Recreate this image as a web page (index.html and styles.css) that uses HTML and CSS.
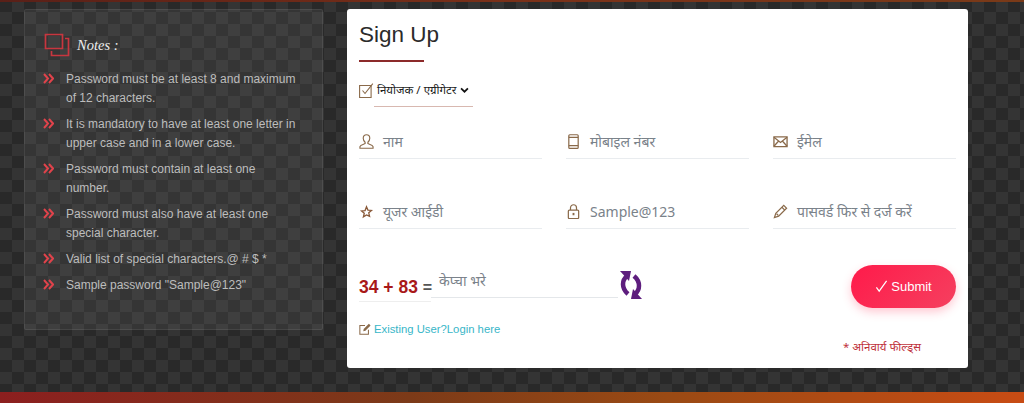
FILE: index.html
```html
<!DOCTYPE html>
<html lang="hi">
<head>
<meta charset="utf-8">
<title>Sign Up</title>
<link rel="stylesheet" href="styles.css">
</head>
<body>
<div class="top-bar"></div>
<main class="main">
  <aside class="notes">
    <div class="notes-head">
      <svg class="notes-icon" viewBox="0 0 26 24" fill="none" stroke="#c8363f" stroke-width="1.7"><path d="M1.500 1.500h17v14h-17z"/><path d="M21 5.500h3.500v17H7.500V18"/></svg>
      <span>Notes :</span>
    </div>
    <ul class="note-list">
      <li class="note"><svg class="chev" viewBox="0 0 11 11"><path d="M1 1l4 4.500-4 4.500M6 1l4 4.500-4 4.500"/></svg><span>Password must be at least 8 and maximum of 12 characters.</span></li>
      <li class="note"><svg class="chev" viewBox="0 0 11 11"><path d="M1 1l4 4.500-4 4.500M6 1l4 4.500-4 4.500"/></svg><span>It is mandatory to have at least one letter in upper case and in a lower case.</span></li>
      <li class="note"><svg class="chev" viewBox="0 0 11 11"><path d="M1 1l4 4.500-4 4.500M6 1l4 4.500-4 4.500"/></svg><span>Password must contain at least one number.</span></li>
      <li class="note"><svg class="chev" viewBox="0 0 11 11"><path d="M1 1l4 4.500-4 4.500M6 1l4 4.500-4 4.500"/></svg><span>Password must also have at least one special character.</span></li>
      <li class="note"><svg class="chev" viewBox="0 0 11 11"><path d="M1 1l4 4.500-4 4.500M6 1l4 4.500-4 4.500"/></svg><span>Valid list of special characters.@ # $ *</span></li>
      <li class="note"><svg class="chev" viewBox="0 0 11 11"><path d="M1 1l4 4.500-4 4.500M6 1l4 4.500-4 4.500"/></svg><span>Sample password "Sample@123"</span></li>
    </ul>
  </aside>
  <section class="card">
    <h1 class="title">Sign Up</h1>
    <div class="title-rule"></div>
    <div class="role">
      <svg class="role-icon" viewBox="0 0 15 15" fill="none" stroke="#8a6a4a" stroke-width="1.100"><path d="M.6 2.500h11.500v12H.6z"/><path d="M3.500 7.500l2.500 3L13.800.6"/></svg>
      <div class="role-select"><span>नियोजक / एग्रीगेटर</span><svg class="caret" viewBox="0 0 10 7" fill="none" stroke="#111" stroke-width="2"><path d="M1 1.500l4 4 4-4"/></svg></div>
    </div>
    <div class="fields">
      <div class="field">
        <svg class="icon" viewBox="0 0 16 16" fill="none" stroke="#8a6a4a" stroke-width="1.200"><path d="M8 .8c2.200 0 3.500 1.600 3.500 3.700 0 2-1 3.300-2 4.300v1.400c1.500.8 5 1.300 5.500 3.300v1.700H1v-1.700c.5-2 4-2.500 5.500-3.300V8.800c-1-1-2-2.300-2-4.300C4.500 2.400 5.800.8 8 .8z"/></svg>
        <span class="ph">नाम</span>
      </div>
      <div class="field">
        <svg class="icon" viewBox="0 0 16 16" fill="none" stroke="#8a6a4a" stroke-width="1.300"><rect x="3" y=".8" width="10" height="14.500" rx="1"/><path d="M3 3.500h10M3 12.500h10"/></svg>
        <span class="ph">मोबाइल नंबर</span>
      </div>
      <div class="field">
        <svg class="icon" viewBox="0 0 16 16" fill="none" stroke="#8a6a4a" stroke-width="1.400"><path d="M1 3h14v10.500H1z"/><path d="M1 3.500l7 5.500 7-5.500M1 13l5-5.500M15 13l-5-5.500"/></svg>
        <span class="ph">ईमेल</span>
      </div>
      <div class="field">
        <svg class="icon" viewBox="0 0 16 16" fill="none" stroke="#8a5a3a" stroke-width="1.400"><path d="M8 3l1.500 3.500 3.800.4-2.900 2.500.9 3.800L8 11.700l-3.300 2 .9-3.800-2.900-2.500 3.800-.4z"/></svg>
        <span class="ph">यूजर आईडी</span>
      </div>
      <div class="field">
        <svg class="icon" viewBox="0 0 16 16" fill="none" stroke="#8a6a4a" stroke-width="1.300"><rect x="2.500" y="6.500" width="11" height="9" rx="1"/><path d="M4.800 6.500V4a3.200 3.200 0 016.400 0v2.500"/><path d="M8 9.500V12" stroke-width="2"/></svg>
        <span class="ph">Sample@123</span>
      </div>
      <div class="field">
        <svg class="icon" viewBox="0 0 16 16" fill="none" stroke="#8a6a4a" stroke-width="1.300"><path d="M11.500 1.500l3 3L6 13l-4.500 1.500L3 10z"/><path d="M9.500 3.500l3 3M3.800 10.400l1.800 1.800"/></svg>
        <span class="ph">पासवर्ड फिर से दर्ज करें</span>
      </div>
    </div>
    <div class="bottom">
      <div class="bottom-left">
        <div class="captcha">
          <div class="sum"><b>34 + 83</b> <i>=</i></div>
          <div class="captcha-input"><span class="ph">केप्चा भरे</span></div>
          <svg class="refresh" viewBox="0 0 24 28" fill="#5e1e7e"><path d="M1 0h11l-2 10z"/><path d="M8 5C3 9 2 17 9 23" fill="none" stroke="#5e1e7e" stroke-width="4.500"/><path d="M23 28H12l2-10z"/><path d="M16 23c5-4 6-12-1-18" fill="none" stroke="#5e1e7e" stroke-width="4.500"/></svg>
        </div>
        <div class="existing">
          <svg class="edit-icon" viewBox="0 0 14 14" fill="none" stroke="#8a6a4a" stroke-width="1.200"><path d="M11 8v5H1V3h6"/><path d="M5 9.500l.5-2.500L11.500 1l2 2-6 6z" fill="#8a6a4a" stroke="none"/></svg>
          <a class="login" href="#">Existing User?Login here</a>
        </div>
      </div>
      <div class="bottom-right">
        <button class="submit" type="button"><svg class="check" viewBox="0 0 14 14" fill="none" stroke="#fff" stroke-width="1.300"><path d="M1.500 8l3 4L12.500 1"/></svg>Submit</button>
        <p class="mandatory">* अनिवार्य फील्ड्स</p>
      </div>
    </div>
  </section>
</main>
<div class="foot-bar"></div>
</body>
</html>
```

FILE: styles.css
```css
* { box-sizing: border-box; }
html, body { margin: 0; padding: 0; }
body {
  width: 1024px;
  height: 403px;
  overflow: hidden;
  display: flex;
  flex-direction: column;
  font-family: "Liberation Sans", "Noto Sans", sans-serif;
  background-color: #2e2e2e;
  background-image: conic-gradient(#343434 25%, #292929 0 50%, #343434 0 75%, #292929 0);
  background-size: 24px 24px;
}
.top-bar {
  height: 2px;
  flex: none;
  background: linear-gradient(90deg, #5a2018, #7a3018 50%, #7a3a18);
}
.main {
  flex: 1;
  display: flex;
  align-items: flex-start;
  padding: 7px 56px 0 24px;
  gap: 24px;
}
.notes {
  width: 299px;
  height: 321px;
  padding: 23px 22px 0 19px;
  background: rgba(255, 255, 255, 0.06);
  border: 1px solid rgba(255, 255, 255, 0.08);
  border-radius: 2px;
}
.notes-head {
  display: flex;
  align-items: center;
  gap: 7px;
  font-family: "Liberation Serif", serif;
  font-style: italic;
  font-size: 14.500px;
  color: #eee;
  height: 24px;
  margin-bottom: 13px;
}
.notes-icon { width: 26px; height: 24px; }
.note-list { list-style: none; margin: 0; padding: 0; }
.note {
  display: flex;
  font-size: 12px;
  line-height: 19px;
  color: #bdbdbd;
  margin-bottom: 7px;
}
.chev {
  width: 11px;
  height: 11px;
  flex: none;
  margin: 3px 12px 0 -1px;
  fill: none;
  stroke: #e0434b;
  stroke-width: 2;
}
.card {
  width: 621px;
  height: 359px;
  padding: 12px 12px 0;
  background: #fff;
  border-radius: 3px;
}
.title {
  margin: 0;
  font-weight: 400;
  font-size: 22.500px;
  line-height: 28px;
  color: #2b2b2b;
}
.title-rule {
  width: 65px;
  height: 2px;
  margin-top: 11px;
  background: #8c2a2a;
}
.role {
  display: flex;
  align-items: center;
  height: 36px;
  margin-top: 11px;
}
.role-icon { width: 15px; height: 15px; flex: none; margin-top: -2px; }
.role-select {
  display: flex;
  align-items: center;
  gap: 4px;
  width: 99px;
  height: 31px;
  padding: 0 0 2px 3px;
  border-bottom: 1px solid #d8b8b0;
  font-family: "Noto Sans", "Liberation Sans", sans-serif;
  font-size: 11.500px;
  color: #222;
  white-space: nowrap;
}
.caret { width: 9px; height: 6px; flex: none; }
.fields {
  display: grid;
  grid-template-columns: repeat(3, 183px);
  column-gap: 24px;
  row-gap: 39px;
  margin-top: 19px;
}
.field {
  display: flex;
  align-items: center;
  gap: 9px;
  height: 31px;
  border-bottom: 1px solid #e9ecef;
  padding-bottom: 4px;
}
.icon { width: 15px; height: 15px; flex: none; }
.ph {
  font-family: "Noto Sans", "Liberation Sans", sans-serif;
  font-size: 14px;
  color: #7a828a;
  white-space: nowrap;
}
.bottom {
  display: flex;
  justify-content: space-between;
  margin-top: 37px;
}
.bottom-left { width: 300px; }
.captcha { display: flex; align-items: flex-end; height: 36px; }
.sum {
  width: 72px;
  height: 36px;
  padding-top: 11px;
  border-bottom: 1px solid #eee;
  font-size: 17.500px;
  line-height: 20px;
  white-space: nowrap;
}
.sum b { color: #a81818; }
.sum i { color: #555; font-style: normal; font-weight: bold; font-size: 16px; }
.captcha-input {
  width: 187px;
  height: 33px;
  margin-bottom: 4px;
  padding: 6px 0 0 8px;
  border-bottom: 1px solid #e4e7ea;
}
.refresh { width: 24px; height: 28px; margin: 0 0 3px 1px; flex: none; }
.existing {
  display: flex;
  align-items: center;
  gap: 3px;
  margin-top: 21px;
}
.edit-icon { width: 12px; height: 12px; flex: none; }
.login { font-size: 11.300px; color: #38b6c8; text-decoration: none; }
.bottom-right {
  display: flex;
  flex-direction: column;
  align-items: flex-end;
}
.submit {
  display: flex;
  align-items: center;
  justify-content: center;
  gap: 3px;
  width: 105px;
  height: 43px;
  margin-top: -1px;
  border: 0;
  border-radius: 22px;
  background: linear-gradient(135deg, #ff1a4a, #f5405f);
  box-shadow: 0 4px 10px rgba(255, 40, 80, 0.25);
  color: #fff;
  font-family: "Liberation Sans", sans-serif;
  font-size: 13px;
}
.check { width: 13px; height: 13px; }
.mandatory {
  margin: 31px 35px 0 0;
  font-family: "Noto Sans", sans-serif;
  font-size: 11.500px;
  color: #c0323c;
  white-space: nowrap;
}
.foot-bar {
  height: 11px;
  flex: none;
  background: linear-gradient(90deg, #8c1f1f, #7c3a18 40%, #9a4a14 65%, #c84c14);
}
```
